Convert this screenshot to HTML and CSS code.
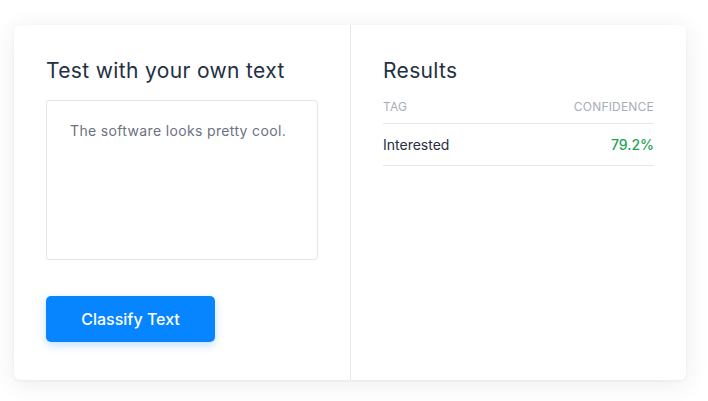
FILE: index.html
```html
<!DOCTYPE html>
<html>
<head>
<meta charset="utf-8">
<link rel="stylesheet" href="styles.css">
</head>
<body>
<div class="page">
  <div class="card">
    <div class="col col-left">
      <h2 class="title">Test with your own text</h2>
      <div class="textbox">The software looks pretty cool.</div>
      <button class="btn">Classify Text</button>
    </div>
    <div class="col col-right">
      <h2 class="title">Results</h2>
      <div class="table">
        <div class="thead">
          <span>Tag</span>
          <span>Confidence</span>
        </div>
        <div class="trow">
          <span class="tag">Interested</span>
          <span class="conf">79.2%</span>
        </div>
      </div>
    </div>
  </div>
</div>
</body>
</html>
```
FILE: styles.css
```css
* { box-sizing: border-box; }
html, body { margin: 0; padding: 0; background: #ffffff; }
body { font-family: "Inter", "Noto Sans", sans-serif; }
.page {
  padding: 25px 22px 21px 14px;
}
.card {
  width: 672px;
  height: 355px;
  background: #fff;
  border-radius: 6px;
  box-shadow: 0 4px 24px rgba(30, 40, 60, 0.09), 0 1px 3px rgba(30, 40, 60, 0.05);
  display: flex;
}
.col { padding: 32px; }
.col-left {
  width: 337px;
  border-right: 1px solid #e6e8eb;
  display: flex;
  flex-direction: column;
}
.col-right { flex: 1; }
.title {
  margin: 0;
  font-size: 21px;
  font-weight: 400;
  color: #243042;
  line-height: 28px;
  letter-spacing: 0.35px;
}
.textbox {
  margin-top: 15px;
  width: 272px;
  height: 160px;
  border: 1px solid #e3e5e8;
  border-radius: 3px;
  padding: 20px 23px;
  font-size: 14px;
  color: #6b7280;
  line-height: 20px;
  letter-spacing: 0.35px;
}
.btn {
  margin-top: 36px;
  width: 169px;
  height: 46px;
  border: none;
  border-radius: 5px;
  background: #0784ff;
  color: #fff;
  font-family: inherit;
  font-size: 16px;
  font-weight: 500;
  box-shadow: 0 3px 10px rgba(7, 132, 255, 0.25);
}
.table { margin-top: 11px; }
.thead, .trow {
  display: flex;
  justify-content: space-between;
  align-items: center;
  border-bottom: 1px solid #e5e7eb;
}
.thead {
  height: 28px;
  padding-bottom: 6px;
  font-size: 12px;
  text-transform: uppercase;
  color: #a7adb6;
  letter-spacing: 0.2px;
}
.trow {
  height: 42px;
  font-size: 14px;
  color: #243042;
}
.conf { color: #22a455; font-weight: 500; }
```
